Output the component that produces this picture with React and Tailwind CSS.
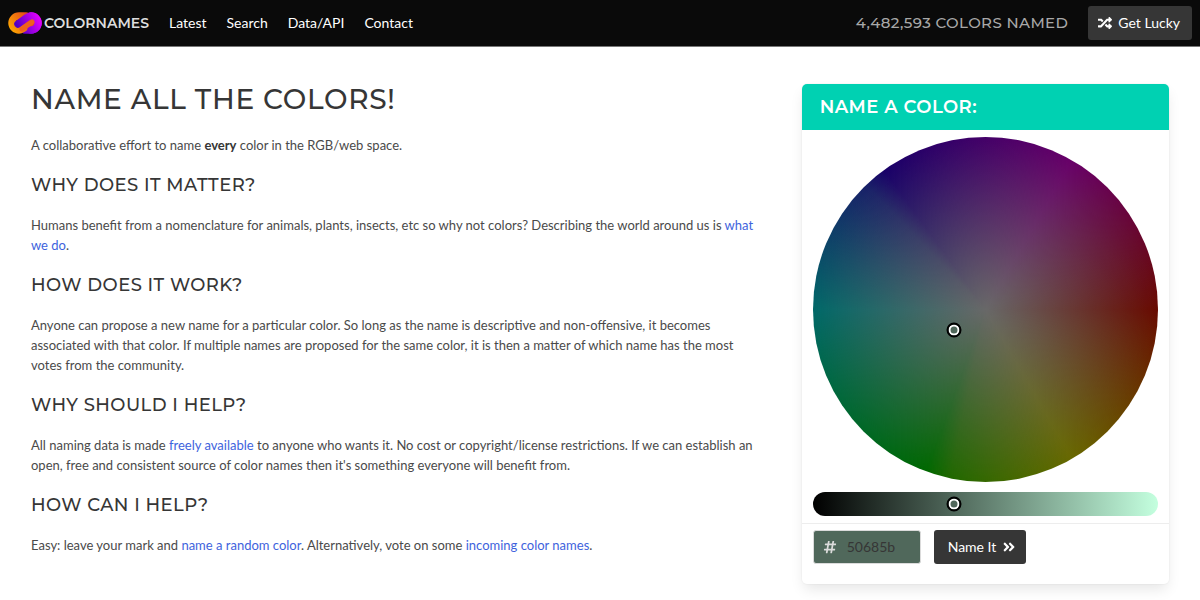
import { useState } from "react";
import { FaRandom, FaHashtag, FaAngleDoubleRight } from "react-icons/fa";

const navLinks = ["Latest", "Search", "Data/API", "Contact"];

const Logo = () => {
    return (
        <svg viewBox="0 0 34 22" className="w-[34px] h-[22px]" fill="none" strokeWidth="7.5" strokeLinecap="round" aria-hidden="true">
            <defs>
                <linearGradient id="orange" gradientUnits="userSpaceOnUse" x1="2" y1="18" x2="22" y2="4">
                    <stop offset="0" stopColor="#ffa800" />
                    <stop offset="1" stopColor="#e2441c" />
                </linearGradient>
                <linearGradient id="purple" gradientUnits="userSpaceOnUse" x1="10" y1="16" x2="32" y2="5">
                    <stop offset="0" stopColor="#5200c4" />
                    <stop offset="1" stopColor="#e800ff" />
                </linearGradient>
            </defs>
            {/* purple tail, orange link, then the purple link on top */}
            <path d="M17 18 H23 A7 7 0 0 0 23 4" stroke="url(#purple)" />
            <path d="M18 4 H11 A7 7 0 0 0 11 18 C13 18 14 17 15 16.5 L24 10" stroke="url(#orange)" />
            <path d="M23 18 A7 7 0 0 0 23 4 C21 4 20 5 19 5.5 L10 12" stroke="url(#purple)" />
            <path d="M14 17 L24 10" stroke="#f0601c" strokeWidth="5" />
        </svg>
    );
};

const Section = ({ title, children }) => {
    return (
        <section>
            <h2 className="mt-5 font-['Montserrat','Inter',sans-serif] text-[18px] leading-[20px] font-medium tracking-wide uppercase text-[#363636]">{title}</h2>
            <p className="mt-5 pr-5">{children}</p>
        </section>
    );
};

const TextLink = ({ children }) => (
    <a href="#" className="text-[#3e63dd] hover:text-[#363636]">{children}</a>
);

const App = () => {
    const [hex, setHex] = useState("50685b");

    return (
        <div className="min-h-screen bg-white font-['Lato',sans-serif] text-[14px] leading-[20px] text-[#4a4a4a]">
            {/* Navbar */}
            <nav className="flex items-center h-[47px] bg-[#0a0a0a] border-b border-[#777777] px-2 text-white">
                <a href="#" className="flex items-center gap-[2px]">
                    <Logo />
                    <span className="font-['Montserrat','Inter',sans-serif] font-semibold text-[#dddddd]">COLORNAMES</span>
                </a>
                <div className="flex gap-5 ml-5">
                    {navLinks.map((item) => (
                        <a href="#" key={item}>{item}</a>
                    ))}
                </div>
                <p className="ml-auto mr-5 font-['Montserrat','Inter',sans-serif] text-[15px] font-medium tracking-wide uppercase text-[#a8a8a8]">4,482,593 colors named</p>
                <button className="flex items-center gap-[6px] h-[34px] pl-[10px] pr-3 rounded-[3px] bg-[#363636] cursor-pointer">
                    <FaRandom />
                    Get Lucky
                </button>
            </nav>

            <main className="flex px-[22px] pt-[37px]">
                {/* Intro text */}
                <div className="w-2/3 px-[9px] text-[13px]">
                    <h1 className="font-['Montserrat','Inter',sans-serif] text-[28px] leading-[31px] font-medium tracking-wide uppercase text-[#363636]">Name all the colors!</h1>
                    <p className="mt-5">A collaborative effort to name <strong className="text-[#363636]">every</strong> color in the RGB/web space.</p>
                    <Section title="Why does it matter?">
                        Humans benefit from a nomenclature for animals, plants, insects, etc so why not colors? Describing the world around us is <TextLink>what we do</TextLink>.
                    </Section>
                    <Section title="How does it work?">
                        Anyone can propose a new name for a particular color. So long as the name is descriptive and non-offensive, it becomes associated with that color. If multiple names are proposed for the same color, it is then a matter of which name has the most votes from the community.
                    </Section>
                    <Section title="Why should I help?">
                        All naming data is made <TextLink>freely available</TextLink> to anyone who wants it. No cost or copyright/license restrictions. If we can establish an open, free and consistent source of color names then it's something everyone will benefit from.
                    </Section>
                    <Section title="How can I help?">
                        Easy: leave your mark and <TextLink>name a random color</TextLink>. Alternatively, vote on some <TextLink>incoming color names</TextLink>.
                    </Section>
                </div>

                {/* Color picker */}
                <div className="w-1/3 px-[9px]">
                    <div className="rounded-[5px] bg-white shadow-[0_7px_14px_-2px_rgba(10,10,10,0.1),0_0_0_1px_rgba(10,10,10,0.02)]">
                        <h2 className="h-[46px] px-[18px] rounded-t-[5px] bg-[#00d1b2] font-['Montserrat','Inter',sans-serif] text-[18px] leading-[46px] font-semibold tracking-wide uppercase text-white">Name a color:</h2>
                        <div className="px-[11px] py-[7px] border-b border-[#ededed]">
                            <div className="relative aspect-square rounded-full bg-[radial-gradient(closest-side,#686868,transparent),conic-gradient(from_90deg,#680a00,#686800_60deg,#206800_102deg,#006800_110deg,#006868_180deg,#182068_226deg,#180068_234deg,#680068_300deg,#680a00)]">
                                <span className="absolute left-[41%] top-[56%] size-[15px] -translate-1/2 rounded-full border-2 border-black bg-[#50685b] ring-2 ring-inset ring-white"></span>
                            </div>
                            <div className="relative mt-[10px] h-6 rounded-full bg-linear-to-r/srgb from-black to-[#c4ffdf]">
                                <span className="absolute left-[41%] top-1/2 size-[15px] -translate-1/2 rounded-full border-2 border-black bg-[#50685b] ring-2 ring-inset ring-white"></span>
                            </div>
                        </div>
                        <form className="flex gap-[13px] px-[11px] pt-[6px] pb-5" onSubmit={(e) => e.preventDefault()}>
                            <label className="flex items-center w-[108px] h-[34px] rounded-[3px] border border-[#dbdbdb] bg-[#50685b] pl-[9px]">
                                <FaHashtag className="shrink-0 text-[#dbdbdb]" />
                                <input value={hex} onChange={(e) => setHex(e.target.value)} aria-label="Hex color" className="w-full ml-[10px] bg-transparent text-[#363636] outline-none" />
                            </label>
                            <button className="flex items-center gap-[6px] h-[34px] pl-[14px] pr-[10px] rounded-[3px] bg-[#363636] text-white cursor-pointer">
                                Name It
                                <FaAngleDoubleRight />
                            </button>
                        </form>
                    </div>
                </div>
            </main>
        </div>
    );
};

export default App;
